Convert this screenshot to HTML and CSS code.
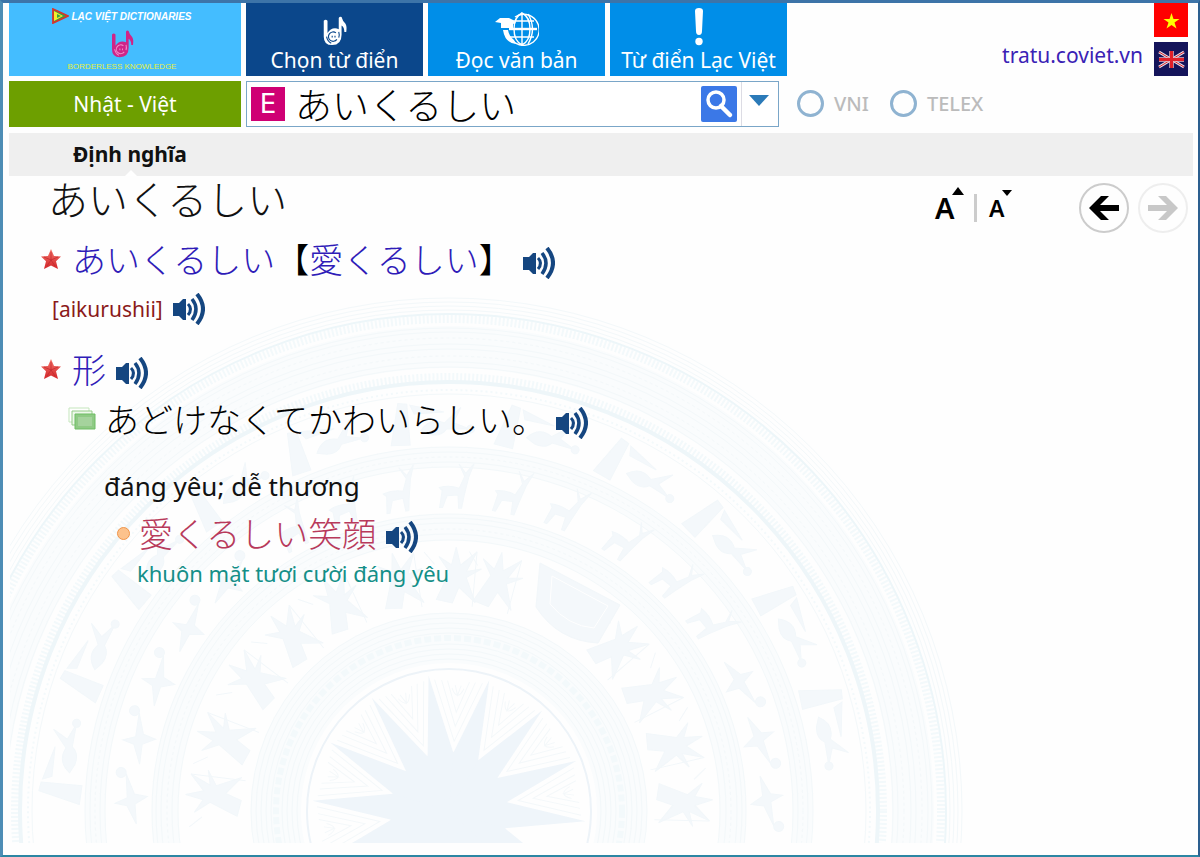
FILE: index.html
```
<!DOCTYPE html>
<html lang="vi">
<head>
<meta charset="utf-8">
<title>Lạc Việt Dictionaries</title>
<link rel="stylesheet" href="styles.css">
</head>
<body>
<svg class="defs" aria-hidden="true">
  <defs>
    <linearGradient id="red" x1="0" y1="0" x2="0" y2="1"><stop offset="0" stop-color="#f4756c"/><stop offset="1" stop-color="#d3262a"/></linearGradient>
    <symbol id="hand" viewBox="0 0 26 32">
      <path d="M1 5q2-2 4 0v13q3-5 8-5 2 0 4 1V2q1-2 3-1 1 4 4 7 2 3 1 9h-2q0-5-3-7v10q0 11-10 11-9 0-9-9z" fill="currentColor"/>
      <path class="swirl" d="M14 18a5 5 0 1 0 1 7M10 21v2M13 21v2M17 17q1 3 0 6M4 22q1 5 5 7" fill="none" stroke-width="1.200"/>
    </symbol>
    <symbol id="speaker" viewBox="0 0 32 32">
      <path d="M0 10h6l4-4h3v21h-3l-4-4H0z" fill="#154680"/>
      <path d="M15 11q5 5 0 11" fill="none" stroke="#154680" stroke-width="3"/>
      <path d="M19 6q8 10 0 21" fill="none" stroke="#154680" stroke-width="3.500"/>
      <path d="M24 1q12 15 0 30" fill="none" stroke="#154680" stroke-width="4"/>
    </symbol>
    <symbol id="star" viewBox="0 0 20 20">
      <path d="M10 0l3 7 7 .5-5 4.800L17 20l-7-3.500L3 20l2-7.700L0 7.500 7 7z" fill="url(#red)"/>
      <path d="M10 11V3M10 11l7-3M10 11l4 6M10 11l-4 6M10 11L3 8" stroke="#c0282c" stroke-width=".7"/>
    </symbol>
  </defs>
</svg>
<div class="app">
  <header class="header">
    <div class="logo">
      <div class="brand">
        <svg width="17" height="16" viewBox="0 0 17 16" aria-hidden="true"><path d="M1 1l15 7L1 15z" fill="#36a443" stroke="#d8342b" stroke-width="1.800"/><path d="M2 3l9 5-9 5z" fill="#f5ee2c"/><path d="M5 6l4 2-4 2z" fill="#36a443"/></svg>
        <span>LẠC VIỆT DICTIONARIES</span>
      </div>
      <svg class="logo-hand" aria-hidden="true"><use href="#hand"/></svg>
      <span class="slogan">BORDERLESS KNOWLEDGE</span>
    </div>
    <nav class="tabs">
      <button class="tab tab-active">
        <svg class="tab-hand" aria-hidden="true"><use href="#hand"/></svg>
        <span>Chọn từ điển</span>
      </button>
      <button class="tab">
        <svg width="44" height="34" viewBox="0 0 44 34" aria-hidden="true">
          <g fill="none" stroke="#fff" stroke-width="1.400"><path d="M20 5A15.500 15.500 0 1 1 17 28"/><path d="M27 1q-8 4-8 16t8 16q8-4 8-16T27 1v32M17 9h22M15 25h24"/><path d="M14 17h28" stroke-width="2.400"/><path d="M33 2q9 15 0 30"/></g>
          <path d="M5 6h9l4 2 3 3-3 1v4H6v-5l-6-1z" fill="#fff"/><path d="M8 18h5q1 6 6 10l2 4q-11-1-13-14z" fill="#fff"/>
        </svg>
        <span>Đọc văn bản</span>
      </button>
      <button class="tab">
        <svg width="10" height="38" viewBox="0 0 10 38" aria-hidden="true"><path d="M1 3q0-3 4-3t4 3L8 23q0 4-3 4t-3-4z" fill="#fff"/><circle cx="5" cy="33.500" r="3.700" fill="#fff"/></svg>
        <span>Từ điển Lạc Việt</span>
      </button>
    </nav>
    <div class="site">
      <a class="site-link" href="#">tratu.coviet.vn</a>
      <div class="flags">
        <button class="flag" aria-label="Tiếng Việt"><svg width="34" height="34" viewBox="0 0 34 34"><path fill="#f00" d="M0 0h34v34H0z"/><path d="M17.500 10l2 6h6l-5 3.500 2 6-5-3.600-5 3.600 2-6-5-3.500h6z" fill="#ff0"/></svg></button>
        <button class="flag" aria-label="English"><svg width="34" height="34" viewBox="0 0 34 34"><path fill="#14145a" d="M0 0h34v34H0z"/><path d="M5 10l25 15M30 10L5 25" stroke="#e8dfe8" stroke-width="2.800"/><path d="M5 10l25 15M30 10L5 25" stroke="#d8242c" stroke-width="1"/><path d="M17.500 9v17M5 17.500h25" stroke="#e5b9c4" stroke-width="4.500"/><path d="M17.500 9v17M5 17.500h25" stroke="#e02029" stroke-width="3"/></svg></button>
      </div>
    </div>
    <button class="language">Nhật - Việt</button>
    <form class="search">
      <span class="mode">E</span>
      <input class="query" type="text" aria-label="Từ cần tra" value="あいくるしい">
      <button class="go" type="button" aria-label="Tra từ"><svg width="36" height="36" viewBox="0 0 36 36"><circle cx="15" cy="14" r="8" fill="none" stroke="#fff" stroke-width="3.500"/><path d="M20 20l9 9" stroke="#fff" stroke-width="4.500" stroke-linecap="round"/></svg></button>
      <button class="more" type="button" aria-label="Lịch sử"><svg width="20" height="11" viewBox="0 0 20 11"><path d="M0 0h20L10 11z" fill="#2b7ab8"/></svg></button>
    </form>
    <div class="typing">
      <label class="method"><input type="radio" name="method"><span>VNI</span></label>
      <label class="method"><input type="radio" name="method"><span>TELEX</span></label>
    </div>
  </header>
  <div class="section"><h2 class="section-title">Định nghĩa</h2></div>
  <main class="entry">
    <svg class="drum" viewBox="10 290 960 553" aria-hidden="true">
      <defs>
        <path id="ray" d="M449 674L436 754L449 811L462 754z"/>
        <g id="ray2"><use href="#ray" transform="rotate(-8.600 449 811)"/><use href="#ray" transform="rotate(17.100 449 811)"/></g>
        <g id="chev" fill="none"><path d="M425 681l24 60 24-60M432 681l17 45 17-45M438 681l11 31 11-31"/><path d="M443 688q6 14 12 0M446 685l3 10 3-10"/></g>
        <g id="bird"><path d="M404 444l8-42 9 1 2 41zM434 430q10-14 24-7l17-15-8 15 16 7-23-1q-6 8-17 5zM424 404l34 8-30 1z"/><circle cx="484" cy="430" r="4"/></g>
        <g id="deer"><path d="M428 488q10-3 20 0l5-12-6-12 7 9 8-10-5 14-4 19-2 12h-3l-1-13-11 1-4 12h-3l2-17z"/></g>
        <g id="heron"><path d="M425 499l18-10 2-12 6 12 24-2-20 9-2 13-8-12z"/><circle cx="476" cy="482" r="5"/></g>
        <g id="dancer"><path d="M429 600l12-28-11-15 13 8 4-18 5 18 16-14-10 20 15-3-15 9 10 25-17-15-6 16z"/><path d="M465 606l3-55M426 565l-11-12" fill="none"/></g>
      </defs>
      <g fill="none" stroke="#f3f9fb">
        <circle cx="449" cy="811" r="492" stroke-width="8" stroke-dasharray="2 2"/>
        <circle cx="449" cy="811" r="464" stroke-width="42" stroke="#fafcfd"/>
        <circle cx="449" cy="811" r="434" stroke-width="8" stroke-dasharray="2 2"/>
        <circle cx="449" cy="811" r="429" stroke-width="4" stroke="#eef6f9"/>
        <circle cx="449" cy="811" r="421" stroke-width="2" stroke-dasharray="2 3"/>
        <circle cx="449" cy="811" r="354" stroke-width="20" stroke="#fafcfd"/>
        <circle cx="449" cy="811" r="284" stroke-width="26" stroke="#fafcfd"/>
        <circle cx="449" cy="811" r="173" stroke-width="50" stroke="#fafcfd"/>
        <circle cx="449" cy="811" r="173" stroke-width="6" stroke-dasharray="7 3"/>
      </g>
      <g fill="none" stroke="#f3f8fa">
        <circle cx="449" cy="811" r="513"/><circle cx="449" cy="811" r="509"/><circle cx="449" cy="811" r="505"/><circle cx="449" cy="811" r="501"/><circle cx="449" cy="811" r="497" stroke="#edf6f9" stroke-width="2"/>
        <circle cx="449" cy="811" r="483"/><circle cx="449" cy="811" r="479"/><circle cx="449" cy="811" r="473" stroke-dasharray="3 3"/><circle cx="449" cy="811" r="467"/><circle cx="449" cy="811" r="462"/><circle cx="449" cy="811" r="455" stroke-dasharray="3 3"/><circle cx="449" cy="811" r="449"/><circle cx="449" cy="811" r="444"/>
        <circle cx="449" cy="811" r="417"/><circle cx="449" cy="811" r="364"/><circle cx="449" cy="811" r="359"/><circle cx="449" cy="811" r="354" stroke-dasharray="3 3"/><circle cx="449" cy="811" r="349"/><circle cx="449" cy="811" r="344"/>
        <circle cx="449" cy="811" r="297"/><circle cx="449" cy="811" r="293"/><circle cx="449" cy="811" r="288"/><circle cx="449" cy="811" r="282" stroke-dasharray="3 3"/><circle cx="449" cy="811" r="277"/><circle cx="449" cy="811" r="271"/>
        <circle cx="449" cy="811" r="198"/><circle cx="449" cy="811" r="193"/><circle cx="449" cy="811" r="188"/><circle cx="449" cy="811" r="183"/><circle cx="449" cy="811" r="178"/><circle cx="449" cy="811" r="167"/><circle cx="449" cy="811" r="162"/><circle cx="449" cy="811" r="157"/><circle cx="449" cy="811" r="152"/><circle cx="449" cy="811" r="142" stroke="#edf3f8" stroke-width="2"/>
      </g>
      <g class="figures">
        <use href="#bird" transform="rotate(-82 449 811)"/><use href="#bird" transform="rotate(-66 449 811)"/><use href="#bird" transform="rotate(-50 449 811)"/><use href="#bird" transform="rotate(-34 449 811)"/><use href="#bird" transform="rotate(-18 449 811)"/><use href="#bird" transform="rotate(-2 449 811)"/><use href="#bird" transform="rotate(14 449 811)"/><use href="#bird" transform="rotate(30 449 811)"/><use href="#bird" transform="rotate(46 449 811)"/><use href="#bird" transform="rotate(62 449 811)"/><use href="#bird" transform="rotate(78 449 811)"/>
        <use href="#deer" transform="rotate(-28 449 811)"/><use href="#deer" transform="rotate(-18 449 811)"/><use href="#deer" transform="rotate(-8 449 811)"/><use href="#deer" transform="rotate(2 449 811)"/><use href="#deer" transform="rotate(12 449 811)"/><use href="#deer" transform="rotate(22 449 811)"/><use href="#deer" transform="rotate(34 449 811)"/><use href="#deer" transform="rotate(45 449 811)"/><use href="#deer" transform="rotate(55 449 811)"/>
        <use href="#heron" transform="rotate(-88 449 811)"/><use href="#heron" transform="rotate(-77 449 811)"/><use href="#heron" transform="rotate(-66 449 811)"/><use href="#heron" transform="rotate(-55 449 811)"/><use href="#heron" transform="rotate(-44 449 811)"/><use href="#heron" transform="rotate(66 449 811)"/><use href="#heron" transform="rotate(77 449 811)"/><use href="#heron" transform="rotate(88 449 811)"/>
        <use href="#dancer" transform="rotate(-86 449 811)"/><use href="#dancer" transform="rotate(-72 449 811)"/><use href="#dancer" transform="rotate(-56 449 811)"/><use href="#dancer" transform="rotate(-42 449 811)"/><use href="#dancer" transform="rotate(-28 449 811)"/><use href="#dancer" transform="rotate(-12 449 811)"/><use href="#dancer" transform="rotate(2 449 811)"/><use href="#dancer" transform="rotate(12 449 811)"/><use href="#dancer" transform="rotate(46 449 811)"/><use href="#dancer" transform="rotate(60 449 811)"/><use href="#dancer" transform="rotate(74 449 811)"/><use href="#dancer" transform="rotate(88 449 811)"/>
        <path d="M540 563l80 42-22 38q-40-2-62-36z"/><path d="M552 576l56 30-14 22q-26-2-44-24z" fill="none" stroke="#fff"/>
      </g>
      <g fill="#eff5fa">
        <circle cx="449" cy="811" r="59"/>
        <use href="#ray2"/><use href="#ray2" transform="rotate(51.430 449 811)"/><use href="#ray2" transform="rotate(102.860 449 811)"/><use href="#ray2" transform="rotate(-51.430 449 811)"/><use href="#ray2" transform="rotate(-102.860 449 811)"/><use href="#ray2" transform="rotate(154.280 449 811)"/>
      </g>
      <g stroke="#f4f8fa">
        <use href="#chev" transform="rotate(-98.600 449 811)"/><use href="#chev" transform="rotate(-72.900 449 811)"/><use href="#chev" transform="rotate(-47.200 449 811)"/><use href="#chev" transform="rotate(-21.500 449 811)"/><use href="#chev" transform="rotate(4.200 449 811)"/><use href="#chev" transform="rotate(30 449 811)"/><use href="#chev" transform="rotate(55.700 449 811)"/><use href="#chev" transform="rotate(81.400 449 811)"/>
      </g>
    </svg>
    <div class="entry-head">
      <h1 class="headword" lang="ja">あいくるしい</h1>
      <div class="tools">
        <button class="size-up" aria-label="Phóng to chữ">A<svg class="up" viewBox="0 0 12 8"><path d="M0 8l6-8 6 8z"/></svg></button>
        <span class="divider"></span>
        <button class="size-down" aria-label="Thu nhỏ chữ">A<svg class="down" viewBox="0 0 10 6"><path d="M0 0h10L5 6z"/></svg></button>
        <button class="round back" aria-label="Quay lại"><svg width="30" height="26" viewBox="0 0 30 26"><path d="M0 13L12 1h8l-9 9h19v6H11l9 9h-8z" fill="currentColor"/></svg></button>
        <button class="round next" aria-label="Tiếp theo" disabled><svg width="30" height="26" viewBox="0 0 30 26"><path d="M30 13L18 1h-8l9 9H0v6h19l-9 9h8z" fill="currentColor"/></svg></button>
      </div>
    </div>
    <p class="line word"><svg class="star"><use href="#star"/></svg><span lang="ja">あいくるしい<b class="bracket">【</b>愛くるしい<b class="bracket">】</b></span><button class="speak" aria-label="Nghe"><svg><use href="#speaker"/></svg></button></p>
    <p class="line reading"><span>[aikurushii]</span><button class="speak" aria-label="Nghe"><svg><use href="#speaker"/></svg></button></p>
    <p class="line word part"><svg class="star"><use href="#star"/></svg><span lang="ja">形</span><button class="speak" aria-label="Nghe"><svg><use href="#speaker"/></svg></button></p>
    <p class="line sense"><svg class="stack" width="28" height="24" viewBox="0 0 28 24"><path d="M1 1h20v14H1z" fill="#fff" stroke="#c5e6bd"/><path d="M4 4h20v14H4z" fill="#eef8eb" stroke="#94cc88"/><path d="M7 7h20v15H7z" fill="#8fca85" stroke="#6fbd65"/><path d="M10 10h14v9H10z" fill="#a5d39d"/></svg><span lang="ja">あどけなくてかわいらしい。</span><button class="speak" aria-label="Nghe"><svg><use href="#speaker"/></svg></button></p>
    <p class="line gloss">đáng yêu; dễ thương</p>
    <p class="line example"><i class="dot"></i><span lang="ja">愛くるしい笑顔</span><button class="speak" aria-label="Nghe"><svg><use href="#speaker"/></svg></button></p>
    <p class="line translation">khuôn mặt tươi cười đáng yêu</p>
  </main>
</div>
</body>
</html>
```
FILE: styles.css
```
* { box-sizing: border-box; }

body {
  margin: 0;
  background: #fefefe;
  color: #111;
  font-family: "Noto Sans", "Noto Sans CJK JP", sans-serif;
  font-size: 22px;
}

button {
  margin: 0;
  padding: 0;
  border: 0;
  background: none;
  color: inherit;
  font: inherit;
  cursor: pointer;
}

svg { display: block; flex: none; }

h1, h2, p { margin: 0; font-weight: 400; }

[lang="ja"], .query {
  font-family: "Noto Sans CJK JP", sans-serif;
  font-weight: 300;
}

.defs { position: absolute; width: 0; height: 0; }

.app {
  display: flex;
  flex-direction: column;
  min-height: 100vh;
  padding: 0 5px 0 6px;
  border-style: solid;
  border-width: 3px 2px 2px 3px;
  border-color: #3d74a8 #2c5f8f #2c86a3 #4d8db5;
  background: #fefefe;
}

.header {
  display: grid;
  grid-template-columns: 232px auto 1fr;
  grid-template-rows: 73px 46px;
  gap: 5px;
}

.logo {
  display: flex;
  flex-direction: column;
  align-items: center;
  padding: 4px 6px 0 0;
  background: #44bdff;
}

.brand {
  display: flex;
  align-items: center;
  gap: 2px;
  height: 18px;
  color: #fff;
  font: italic bold 10px "Liberation Sans", sans-serif;
  white-space: nowrap;
}

.logo-hand {
  width: 25px;
  height: 28px;
  margin-top: 5px;
  color: #cf2488;
  --swirl: #f08bc8;
}

.swirl { stroke: var(--swirl); }

.slogan {
  color: #e6ee3c;
  font: 8px/18px "Liberation Sans", sans-serif;
}

.tabs { display: flex; gap: 5px; }

.tab {
  display: flex;
  flex-direction: column;
  align-items: center;
  justify-content: flex-end;
  width: 177px;
  padding-bottom: 2px;
  background: #008ee8;
  color: #fff;
  font-size: 21px;
  line-height: 28px;
}

.tab-active { background: #0b478b; }
.tab-hand { width: 26px; height: 30px; --swirl: #0b478b; }

.site {
  display: flex;
  justify-content: flex-end;
  gap: 11px;
  padding-right: 5px;
}

.site-link {
  padding-top: 38px;
  color: #3a22b5;
  font-size: 21px;
  line-height: 28px;
  text-decoration: none;
}

.flags { display: flex; flex-direction: column; gap: 5px; }

.language {
  background: #6d9f00;
  color: #fff;
  font-size: 21px;
}

.search {
  display: flex;
  align-items: center;
  width: 533px;
  padding-left: 4px;
  border: 1px solid #7aa6c8;
  background: #fff;
}

.mode {
  width: 34px;
  background: #cf0074;
  color: #fff;
  font-family: "DejaVu Sans", sans-serif;
  font-size: 26px;
  line-height: 34px;
  text-align: center;
}

.query {
  flex: 1;
  min-width: 0;
  height: 44px;
  padding: 0 10px;
  border: 0;
  outline: 0;
  background: none;
  font-size: 37px;
}

.go { margin-right: 4px; border-radius: 2px; background: #3b78e7; }

.more {
  display: flex;
  justify-content: center;
  width: 37px;
  height: 44px;
  padding: 13px 3px 0 0;
  border-left: 1px solid #dcdce4;
}

.typing {
  display: flex;
  align-items: center;
  gap: 21px;
  margin-left: -8px;
  padding: 0 0 2px 13px;
}

.method {
  display: flex;
  align-items: center;
  gap: 10px;
  color: #bbb;
  font-size: 20px;
  font-weight: 500;
}

.method input {
  width: 27px;
  height: 27px;
  margin: 0;
  border: 3px solid #8fb3d1;
  border-radius: 50%;
  appearance: none;
}

.section {
  display: flex;
  justify-content: flex-start;
  margin-top: 6px;
  background: #efefef;
}

.section-title {
  position: relative;
  padding: 0 64px;
  font-size: 21px;
  font-weight: 700;
  line-height: 43px;
}

.section-title::after {
  position: absolute;
  bottom: 0;
  left: 116px;
  border: 6px solid transparent;
  border-top: 0;
  border-bottom-color: #fff;
  content: "";
}

.entry {
  position: relative;
  flex: 1;
  padding-left: 32px;
}

.entry > * { position: relative; }

.entry > .drum {
  position: absolute;
  bottom: 12px;
  left: 1px;
  width: 960px;
  height: 553px;
}

.figures { fill: #f4f8fb; stroke: #f2f7fa; }

.entry-head { display: flex; justify-content: space-between; height: 63px; }

.headword { padding-left: 7px; font-size: 40px; line-height: 45px; }

.tools { display: flex; align-items: center; padding-right: 5px; color: #000; }

.size-up, .size-down {
  position: relative;
  font-weight: 600;
  line-height: 32px;
}

.size-up { width: 32px; font-size: 29px; text-align: left; }
.size-down { width: 32px; font-size: 23px; text-align: left; }

.size-up svg { position: absolute; top: -5px; right: 3px; width: 12px; height: 8px; }
.size-down svg { position: absolute; top: -2px; right: 9px; width: 10px; height: 6px; }

.divider { width: 3px; height: 28px; margin: 0 12px 0 7px; background: #ccc; }

.round {
  display: flex;
  align-items: center;
  justify-content: center;
  width: 50px;
  height: 50px;
  border: 2px solid #ccc;
  border-radius: 50%;
  background: #fefefe;
}

.back { margin: 0 9px 0 58px; }
.next { border-color: #eee; color: #c8c8c8; }

.line { display: flex; align-items: center; line-height: 40px; white-space: nowrap; }

.line [lang="ja"] { font-size: 34px; }

.star { width: 20px; height: 20px; margin-right: 11px; }

.word { color: #2f1cb8; }
.bracket { color: #000; font-weight: inherit; }

.speak { margin: 8px 0 0 10px; }
.speak svg { width: 32px; height: 32px; }

.reading {
  height: 32px;
  margin: 14px 0 24px;
  padding-left: 11px;
  color: #8b1a1a;
  font-size: 21px;
}

.reading .speak { margin-top: 0; }

.sense { margin-top: 10px; padding-left: 27px; color: #000; }
.stack { margin-right: 9px; }

.gloss { margin-top: 27px; padding-left: 63px; font-size: 26px; }

.example { margin-top: 7px; padding-left: 76px; color: #b83a5b; }

.dot {
  width: 13px;
  height: 13px;
  margin-right: 9px;
  border: 1px solid #f0954a;
  border-radius: 50%;
  background: #fcc28c;
}

.translation { padding-left: 96px; color: #148f88; font-size: 22px; }
```
